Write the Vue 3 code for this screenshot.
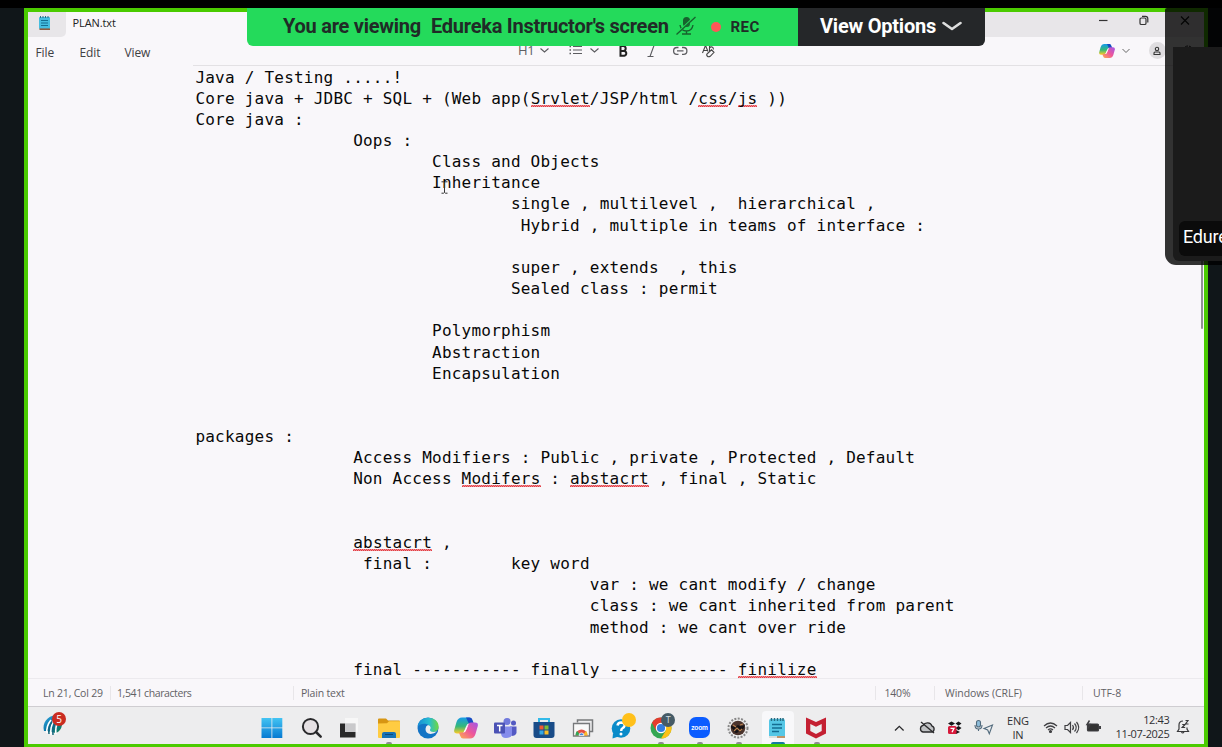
<script setup>
const lines = [
  'Java / Testing .....!',
  'Core java + JDBC + SQL + (Web app(~Srvlet~/JSP/html /~css~/~js~ ))',
  'Core java :',
  '\t\tOops :',
  '\t\t\tClass and Objects',
  '\t\t\tInheritance',
  '\t\t\t\tsingle , multilevel ,  hierarchical ,',
  '\t\t\t\t Hybrid , multiple in teams of interface :',
  '',
  '\t\t\t\tsuper , extends  , this',
  '\t\t\t\tSealed class : permit',
  '',
  '\t\t\tPolymorphism',
  '\t\t\tAbstraction',
  '\t\t\tEncapsulation',
  '',
  '',
  'packages :',
  '\t\tAccess Modifiers : Public , private , Protected , Default',
  '\t\tNon Access ~Modifers~ : ~abstacrt~ , final , Static',
  '',
  '',
  '\t\t~abstacrt~ ,',
  '\t\t final :\tkey word',
  '\t\t\t\t\tvar : we cant modify / change',
  '\t\t\t\t\tclass : we cant inherited from parent',
  '\t\t\t\t\tmethod : we cant over ride',
  '',
  '\t\tfinal ----------- finally ------------ ~finilize~',
].map((line) => line.replace(/\t/g, '        ').split('~'))
</script>

<template>
  <div class="screen">
    <div class="frame">
      <header class="titlebar">
        <div class="app-tab">
          <svg width="14" height="16" viewBox="0 0 14 16">
            <rect x="1" y="2" width="11" height="12" rx="1" fill="#45bddf" />
            <path d="M1.500 13.400h10.500v1.600h-10.500z" fill="#8c5a3c" />
            <path d="M2.500 1v2M5 1v2M7.500 1v2M10 1v2" stroke="#276c87" stroke-width="1" />
            <path d="M3 5.500h7M3 8h7M3 10.500h7" stroke="#146f91" stroke-width="1.200" />
          </svg>
        </div>
        <div class="file-tab">PLAN.txt</div>
        <div class="window-buttons">
          <svg width="100" height="24" viewBox="0 0 100 24" fill="none" stroke="#333">
            <path d="M1 8.500h8.500" stroke-width="1.200" />
            <rect x="42" y="6" width="6" height="6.500" rx="1.300" stroke-width="1.200" />
            <path d="M44 4.300h3.500q2.300 0 2.300 2.300v4" stroke-width="1.200" />
            <path d="M83 4.500l8 8M91 4.500l-8 8" stroke="#111" stroke-width="1.200" />
          </svg>
        </div>
      </header>

      <nav class="menubar">
        <span class="menu file">File</span>
        <span class="menu edit">Edit</span>
        <span class="menu view">View</span>
        <div class="format-tools">
          <span class="h1-tool">H1</span>
          <svg width="190" height="24" viewBox="538 38 190 24" fill="none" stroke="#5c5c60" stroke-width="1.100">
            <path d="M540.500 48.500l4 3.500 4-3.500M590.500 48.500l4 3.500 4-3.500" />
            <path d="M573 46.500h9M573 50h9M573 53.500h9" />
            <path d="M569.500 46.500h1.500M569.500 50h1.500M569.500 53.500h1.500" stroke-width="1.500" />
            <path d="M620.500 46h3.200a2.500 2.500 0 0 1 0 4.900h-3.200zM620.500 50.900h3.800a2.500 2.500 0 0 1 0 4.900h-3.800z" stroke="#222" stroke-width="2" />
            <path d="M650.500 45.500h6M647.500 56.500h6M654 45.500l-4 11" />
            <path d="M678.500 47.500h-1.500a3.400 3.400 0 0 0 0 6.800h1.500M682 47.500h1.500a3.400 3.400 0 0 1 0 6.800H682M677 50.900h6.500" stroke-width="1.300" />
            <path d="M702.500 53l3-7.500 2.500 6M703.700 50.500h3.800M709.500 45v6" stroke="#444" />
            <path d="M709.500 48q1-1.500 2.600-.900 1.700.900 1.200 2.400M707.500 53.500l4-3.700 2.500 2.500-3.800 4q-1.700 1-3-.300-1.200-1.200.300-2.500z" stroke="#444" />
          </svg>
        </div>
        <div class="account-tools">
          <svg class="copilot-small" width="16" height="16" viewBox="0 0 24 24">
            <defs>
              <linearGradient id="cs1" x1="0" y1="0" x2="0" y2="1"><stop stop-color="#159be9" /><stop offset=".55" stop-color="#35b879" /><stop offset="1" stop-color="#ffcb25" /></linearGradient>
              <linearGradient id="cs2" x1="1" y1="0" x2="0" y2="1"><stop stop-color="#a057e8" /><stop offset=".5" stop-color="#ef5699" /><stop offset="1" stop-color="#ffad4c" /></linearGradient>
            </defs>
            <path d="M8 1.500h7q2 0 3 3l1 3h-4q-2 0-3 3l-2 5q-1 2-3 2H3q-4 0-2.500-4.500l2-7Q4 1.500 8 1.500z" fill="url(#cs1)" />
            <path d="M12 1.500h4q2 0 2.500 2.500L20 8h-5z" fill="#174bc3" />
            <path d="M16 22.500H9q-2 0-3-3l-1-3h4q2 0 3-3l2-5q1-2 3-2h4q4 0 2.500 4.500l-2 7q-1.500 4.500-5.500 4.500z" fill="url(#cs2)" />
            <path d="M14.500 7.500l-5 9q2 0 3-3l2-5z" fill="#fff" />
          </svg>
          <svg width="10" height="8" viewBox="0 0 10 8" fill="none" stroke="#666"><path d="M1.500 2l3.500 3.500L8.500 2" /></svg>
          <span class="person">
            <svg width="10" height="10" viewBox="0 0 10 10" fill="none" stroke="#333" stroke-width="1.100"><circle cx="5" cy="3" r="1.700" /><path d="M2 8.500V7q0-1 1-1h4q1 0 1 1v1.500z" /></svg>
          </span>
          <svg class="gear" width="14" height="14" viewBox="0 0 14 14" fill="none" stroke="#222"><circle cx="7" cy="7" r="5" stroke-dasharray="3 1" /><circle cx="7" cy="7" r="2" /></svg>
        </div>
      </nav>

      <main class="editor">
        <div v-for="(parts, i) in lines" :key="i" class="line"><span v-for="(part, j) in parts" :key="j" :class="{ misspelt: j % 2 === 1 }">{{ part }}</span></div>
        <svg class="ibeam" width="7" height="13" viewBox="0 0 7 13" fill="none" stroke="#333"><path d="M.500.800h2l1 .800 1-.800h2M3.500 1.500v10M.500 12.200h2l1-.800 1 .800h2" /></svg>
        <div class="scroll-thumb"></div>
      </main>

      <footer class="statusbar">
        <span class="position">Ln 21, Col 29</span>
        <span class="characters">1,541 characters</span>
        <span class="kind">Plain text</span>
        <span class="zoom">140%</span>
        <span class="eol">Windows (CRLF)</span>
        <span class="encoding">UTF-8</span>
      </footer>

      <div class="taskbar">
        <div class="widget">
          <svg width="28" height="30" viewBox="0 0 28 30">
            <defs><linearGradient id="ball" x2="1" y2="1"><stop stop-color="#38ace1" /><stop offset=".5" stop-color="#0976a9" /><stop offset="1" stop-color="#138148" /></linearGradient></defs>
            <path d="M2 22C0 14 5 7 14 6q7 2 6 10-1 6-6 8L5 22z" fill="url(#ball)" />
            <path d="M5 24q-1-7 4-13M9 26q-1-8 3-15M14 25q-1-7 2-12" fill="none" stroke="#fff" stroke-width="1.600" />
            <path d="M7 25q-1-7 3-12M11 26q-1-8 3-13" fill="none" stroke="#14677d" stroke-width="1.500" />
          </svg>
          <span class="count">5</span>
        </div>

        <div class="apps">
          <div class="app">
            <svg viewBox="0 0 24 24"><defs><linearGradient id="win" x2="0" y2="1"><stop stop-color="#43c4f3" /><stop offset="1" stop-color="#077ad2" /></linearGradient></defs><path d="M1.500 2h10v9.500h-10zM12.300 2h10v9.500h-10zM1.500 12.300h10V22h-10zM12.300 12.300h10V22h-10z" fill="url(#win)" /></svg>
          </div>
          <div class="app">
            <svg viewBox="0 0 24 24" fill="none" stroke="#29292b"><circle cx="11.500" cy="10.500" r="7.600" fill="#e5e0e3" stroke-width="2" /><path d="M17 16l4.700 4.700" stroke-width="2.500" stroke-linecap="round" /></svg>
          </div>
          <div class="app">
            <svg viewBox="0 0 24 24"><path d="M2 7.500h15.500v14H2z" fill="#292929" /><path d="M7 2h13v14H7z" fill="#f8f8f8" opacity=".85" /><path d="M7 7.500h10.500V16H7z" fill="#c9c9cb" /></svg>
          </div>
          <div class="app running">
            <svg viewBox="0 0 24 24"><path d="M1 3.500q0-1 1-1h7l2 2h11q1 0 1 1V12H1z" fill="#d79613" /><path d="M1 7.500l9-.200 2-2h11V21q0 1-1 1H2q-1 0-1-1z" fill="#ffcc42" /><path d="M5 22v-4q0-2 2-2h10q2 0 2 2v4z" fill="#1872b5" /><path d="M8 18.500h8" stroke="#114976" /></svg>
          </div>
          <div class="app">
            <svg viewBox="0 0 24 24"><defs><linearGradient id="ed" x2="1"><stop stop-color="#168bd5" /><stop offset=".55" stop-color="#27bdd0" /><stop offset="1" stop-color="#70d83f" /></linearGradient></defs><circle cx="12" cy="12" r="10.500" fill="#1474c5" /><path d="M1.600 11C2-1.500 23-1 22.600 11q-.300 5-5.800 5c-4 0-4-1-2.700-3 .6-5-6-6-9.600-4.500-2 1-2.800 2-2.900 2.500z" fill="url(#ed)" /><path d="M14.800 12q-1.500 2-.500 3 1.700 1.700 6.700.600-3 2.500-6.500 2.400-5-.500-5-5 0-3 2.500-4 2.500.5 2.800 3z" fill="#ededef" /></svg>
          </div>
          <div class="app">
            <svg viewBox="0 0 24 24"><path d="M8 1.500h7q2 0 3 3l1 3h-4q-2 0-3 3l-2 5q-1 2-3 2H3q-4 0-2.500-4.500l2-7Q4 1.500 8 1.500z" fill="url(#cs1)" /><path d="M12 1.500h4q2 0 2.500 2.500L20 8h-5z" fill="#174bc3" /><path d="M16 22.500H9q-2 0-3-3l-1-3h4q2 0 3-3l2-5q1-2 3-2h4q4 0 2.500 4.500l-2 7q-1.500 4.500-5.500 4.500z" fill="url(#cs2)" /><path d="M14.500 7.500l-5 9q2 0 3-3l2-5z" fill="#fff" /></svg>
          </div>
          <div class="app">
            <svg viewBox="0 0 24 24"><circle cx="14" cy="5.500" r="3.500" fill="#7179dc" /><circle cx="20.500" cy="7" r="2.500" fill="#535ac2" /><path d="M17 10.500h6.500V17q-1 3-5 3z" fill="#545ac4" /><path d="M8 10.500h11V17q0 5-6 5-5 0-5-5z" fill="#858cec" /><rect x="1" y="6.500" width="11" height="11" rx="1" fill="#4b52b5" /><path d="M4 9.500h5.500M6.700 9.500v6" stroke="#fff" stroke-width="1.500" /></svg>
          </div>
          <div class="app">
            <svg viewBox="0 0 24 24"><path d="M7 7V3h10v4" fill="none" stroke="#32bae9" stroke-width="2" /><path d="M1.500 6h21v13q0 3-3 3h-15q-3 0-3-3z" fill="#194c88" /><path d="M7.500 9.500h4v4h-4z" fill="#f25a32" /><path d="M12.500 9.500h4v4h-4z" fill="#80bd34" /><path d="M7.500 14.500h4v4h-4z" fill="#35a7e2" /><path d="M12.500 14.500h4v4h-4z" fill="#f8bd26" /></svg>
          </div>
          <div class="app">
            <svg viewBox="0 0 24 24"><path d="M6.500 6.500V4h15v11.500H19" fill="none" stroke="#77797b" stroke-width="1.500" /><path d="M2.500 7.500h16V20h-16z" fill="#f9f9f9" stroke="#77797b" stroke-width="1.300" /><path d="M4.500 19.400a6 6 0 0 1 12 0z" fill="#e44f43" /><path d="M4.500 19.400q0-3 1.700-4.400l3.300 4.400z" fill="#32a757" /><path d="M16.500 19.400q0-3-1.500-4.400l-3.500 4.400z" fill="#fabd2c" /><path d="M8 19.400a2.500 2.500 0 0 1 5 0z" fill="#357ddb" stroke="#fff" stroke-width=".8" /></svg>
          </div>
          <div class="app">
            <svg viewBox="0 0 24 24"><circle cx="11" cy="12.500" r="9.300" fill="#098bc9" /><path d="M3 17l-.5 5.500 6-2z" fill="#098bc9" /><path d="M7.500 9.500q.500-3 3.700-3 3.600.3 3.300 3.200-.3 1.800-2.300 2.800-1 .500-1 2.500" fill="none" stroke="#fff" stroke-width="2.500" /><circle cx="11" cy="18" r="1.500" fill="#fff" /></svg>
            <span class="dot yellow"></span>
          </div>
          <div class="app running">
            <svg viewBox="0 0 24 24"><circle cx="12" cy="12" r="10.500" fill="#34a653" /><path d="M2.900 6.700A10.500 10.500 0 0 1 21.100 6.700H12L7.300 15z" fill="#e33b2e" /><path d="M12 6.700h9.100A10.500 10.500 0 0 1 12 22.500l4.800-8z" fill="#fbc116" /><circle cx="12" cy="12" r="5.200" fill="#fff" /><circle cx="12" cy="12" r="4.100" fill="#347de0" /></svg>
            <span class="dot profile">T</span>
          </div>
          <div class="app running"><span class="zoom-app">zoom</span></div>
          <div class="app running">
            <svg viewBox="0 0 24 24"><circle cx="12" cy="12" r="9.500" fill="#eee" stroke="#888" stroke-width="2" stroke-dasharray="2 1.400" /><circle cx="12" cy="12" r="7.300" fill="#4b342d" /><path d="M5 9q3 3 7 0 4 3 7-1-1 6-3 5-1 5-3 2l-2 2q-4 0-4-4-3-1-2-4z" fill="#171315" /><path d="M7 9l3 2M14 9l3-1M8 15l3-3 3 3 2-2" stroke="#ba8250" stroke-width="1.200" fill="none" /></svg>
          </div>
          <div class="app active">
            <svg viewBox="0 0 24 24"><rect x="4" y="3" width="16" height="19" rx="1.500" fill="#55c7e6" /><path d="M4 20h16v2H4z" fill="#d9dfde" /><path d="M12 21h8" stroke="#b67b45" stroke-width="1.500" /><path d="M6.500 2v3M9.500 2v3M12.500 2v3M15.500 2v3M18 2v3" stroke="#256c83" stroke-width="1.500" /><path d="M7 8.500h10M7 12h10M7 15.500h7" stroke="#146d92" stroke-width="1.400" /></svg>
          </div>
          <div class="app running">
            <svg viewBox="0 0 24 24"><path d="M2 1.500l10 4.500 10-4.500v16L12 22.500 2 17.500zM6.300 8v7l5.700 3 5.700-3V8L12 10.700z" fill="#c42032" fill-rule="evenodd" /></svg>
          </div>
        </div>

        <div class="tray">
          <svg width="104" height="24" viewBox="892 715 104 24" fill="none" stroke="#29292b" stroke-width="1.300">
            <path d="M896 730.500l4.300-4.200 4.300 4.200" />
            <path d="M925.500 732h7a3 3 0 0 0 .6-5.800 5 5 0 0 0-9-.8 3.400 3.400 0 0 0-.1 6.600z" fill="#bfc1c3" /><path d="M922 722l13 11" />
            <g fill="#171719" stroke="none"><path d="M949 723.500l3.500-2 3.500 2-3.500 2.200zM956.500 723.500l3-2 3 2-3 2.200zM949 728l3.500-2 3.500 2-3.500 2.200zM956.500 728l3-2 3 2-3 2.200zM953 732l4-2 4 2-4 2z" /></g>
            <rect x="949" y="726" width="8.500" height="8" rx="1.500" fill="#d7193a" stroke="none" />
            <path d="M951.500 728.300h3.500l-2 4" stroke="#fff" />
            <rect x="977.500" y="720.500" width="4" height="6.500" rx="2" stroke="#526b7d" fill="#8dbddb" stroke-width="1.100" /><path d="M976 725q0 4 3.500 4t3.500-4M979.500 729v2" stroke="#526b7d" stroke-width="1.100" />
            <path d="M993.500 725l-8.500 3.500 3.700 1.500 1.600 3.700z" stroke="#526b7d" stroke-width="1.100" />
          </svg>
          <div class="language"><span>ENG</span><span>IN</span></div>
          <svg class="status-icons" width="60" height="24" viewBox="1042 715 60 24" fill="none" stroke="#3f3f42" stroke-width="1.200">
            <path d="M1045 726q6.500-6 13 0M1047 728q4.500-4 9 0M1049 730q2.500-2.200 5 0" /><circle cx="1051.500" cy="731.500" r="1" fill="#444" />
            <path d="M1066 725.500h2.500l3-3v10l-3-3H1066zM1073.500 725q2 2.500 0 5M1075.500 723.500q3.500 4 0 8M1077.500 722q4.500 5.500 0 11" />
            <rect x="1088.500" y="724" width="11" height="7" rx="1" fill="#333" /><path d="M1101 726v3" stroke-width="2" /><path d="M1090.500 720.500l-2.500 4h3l-2 4" stroke-width="1.500" />
          </svg>
          <div class="clock"><span>12:43</span><span>11-07-2025</span></div>
          <svg class="bell" width="14" height="18" viewBox="0 0 14 18" fill="none" stroke="#39393b" stroke-width="1.200"><path d="M7 3Q3 3 3 7v4l-1.500 2.500h11L11 11V9.500M5.500 14q1.200 2 2.500 0M6.200 6.500h2.800l-2.800 3h3M9.500 2.500H12L9.500 6h3" /></svg>
        </div>
      </div>
    </div>

    <div class="share-banner">
      <div class="sharing">
        <span class="viewing">You are viewing</span>
        <span class="presenter">Edureka Instructor's screen</span>
        <svg width="20" height="20" viewBox="0 0 20 20"><rect x="7" y="1" width="7" height="10" rx="3.500" fill="#17612d" /><path d="M4 9q1 6 6.500 6T17 9M10.500 15v3M6 18h9" fill="none" stroke="#17612d" stroke-width="1.400" /><path d="M1 17.500L18.500 1" stroke="#23d959" stroke-width="2" /><path d="M.500 18.500L19.500 1" stroke="#17612d" stroke-width="1.300" /></svg>
        <i class="rec-dot"></i>
        <span class="rec">REC</span>
      </div>
      <div class="options">
        <span>View Options</span>
        <svg width="20" height="12" viewBox="0 0 20 12" fill="none" stroke="#ddd" stroke-width="2.600"><path d="M1.500 2l8.500 6 8.500-6" stroke-linecap="round" stroke-linejoin="round" /></svg>
      </div>
    </div>

    <aside class="video-panel">
      <div class="video"><span class="participant">Edure</span></div>
    </aside>
  </div>
</template>

<style>
html, body { margin: 0; overflow: hidden; background: #101619; }
</style>

<style scoped>
* { box-sizing: border-box; }
svg { display: block; flex: none; }
.screen { position: relative; width: 1222px; height: 747px; overflow: hidden; background: #101619; border-top: 8px solid #000; font-family: "Open Sans", "Noto Sans", sans-serif; }
.frame { width: 1184px; height: 740px; margin-left: 24px; border: 4px solid #4bcb00; background: #f9f7fa; display: flex; flex-direction: column; }
.titlebar { height: 25px; flex: none; display: flex; background: #f9f7fa; }
.app-tab { width: 38px; background: #e8e6e9; border-radius: 0 0 5px 0; padding: 3px 0 0 10px; }
.file-tab { width: 500px; padding: 1px 0 0 6.500px; font-size: 11px; line-height: 19px; color: #222; letter-spacing: -.1px; }
.window-buttons { flex: 1; background: #e8e6e9; display: flex; padding-left: 532px; }
.menubar { height: 29px; flex: none; display: flex; color: #404043; font-size: 12px; line-height: 32px; background: linear-gradient(#e3e1e4, #e3e1e4) 165px 28px / 1011px 1px no-repeat; letter-spacing: -.1px; }
.menu { flex: none; white-space: nowrap; }
.file { width: 44.500px; padding-left: 7.500px; }
.edit { width: 45px; padding-left: 7px; }
.view { width: 80px; padding-left: 7px; }
.format-tools { width: 531px; display: flex; padding-left: 320.500px; }
.h1-tool { width: 19.500px; line-height: 26px; font-size: 13px; color: #606064; letter-spacing: -.4px; }
.format-tools svg { margin-top: 1px; }
.account-tools { margin-left: 369px; display: flex; align-items: center; height: 27px; flex: none; }
.account-tools > svg { margin-right: 6px; }
.account-tools .copilot-small { margin-left: 1px; }
.person { width: 17px; height: 17px; margin-left: 12px; border-radius: 50%; background: #dfdde0; display: flex; align-items: center; justify-content: center; flex: none; }
.account-tools .gear { margin: 0 0 0 15px; }
.editor { position: relative; flex: none; height: 613px; overflow: hidden; padding: .500px 0 0 167.400px; color: #080808; font: 16px/21.170px "DejaVu Sans Mono", monospace; letter-spacing: .227px; border-bottom: 1px solid #eceaee; }
.line { height: 21.170px; white-space: pre; }
.misspelt { background: linear-gradient(90deg, #e23c44 50%, #ee8c91 50%) 0 calc(100% - 1px) / 2px 1px repeat-x, linear-gradient(90deg, #ee8c91 50%, #e6474f 50%) 0 calc(100% - 2px) / 2px 1px repeat-x; }
.ibeam { position: absolute; left: 413px; top: 115px; }
.scroll-thumb { position: absolute; right: 1px; top: 60px; width: 2px; height: 203px; background: #929095; border-radius: 2px; }
.statusbar { height: 28px; flex: none; display: flex; align-items: center; border-bottom: 1px solid #cfcdd1; font-size: 10.500px; color: #626165; letter-spacing: -.200px; }
.statusbar span { height: 14px; line-height: 14px; white-space: nowrap; border-left: 1px solid #e8e6e9; flex: none; }
.statusbar .position { width: 82px; padding-left: 15px; border-left: 0; }
.statusbar .characters { width: 183px; padding-left: 6px; letter-spacing: -.400px; }
.kind { width: 582px; padding-left: 7px; }
.zoom { width: 59px; padding-left: 8.500px; }
.statusbar .eol { width: 148px; padding-left: 10px; letter-spacing: -.050px; }
.statusbar .encoding { padding-left: 10px; letter-spacing: 0; }
.taskbar { height: 37px; flex: none; display: flex; background: #ededee; }
.widget { position: relative; width: 224.800px; padding: 2px 0 0 14px; }
.count { position: absolute; left: 24px; top: 5px; width: 14px; height: 14px; border-radius: 50%; background: #ca2c20; color: #fff; text-align: center; font-size: 10px; line-height: 14px; }
.apps { display: flex; flex: none; }
.app { position: relative; width: 38.850px; height: 37px; display: flex; justify-content: center; padding-top: 9px; }
.app svg { width: 24px; height: 24px; }
.running::after { content: ""; position: absolute; left: 17px; bottom: 0; width: 6px; height: 2px; border-radius: 2px 2px 0 0; background: #8c8c8e; }
.active::before { content: ""; position: absolute; left: 4px; top: 4px; width: 32px; height: 33px; background: #f8f8fa; border-radius: 4px 4px 0 0; }
.active svg { position: relative; }
.active::after { content: ""; position: absolute; left: 13px; bottom: 0; width: 14px; height: 2px; background: #147b9d; border-radius: 2px 2px 0 0; }
.dot { position: absolute; left: 20px; top: 5.500px; width: 14px; height: 14px; border-radius: 50%; color: #d6dfe2; text-align: center; font-size: 9px; line-height: 14px; }
.yellow { background: #ffc01a; }
.profile { background: #465b66; }
.zoom-app { width: 21px; height: 21px; margin-top: 1px; border-radius: 7px; background: #0b5cff; color: #fff; font: bold 7px/20px Lato, sans-serif; text-align: center; letter-spacing: -.2px; }
.tray { margin-left: 56px; padding-top: 8px; display: flex; flex: none; color: #303033; font-size: 11px; line-height: 14px; }
.tray > svg { flex: none; }
.language { width: 45px; display: flex; flex-direction: column; align-items: center; margin-top: -1px; letter-spacing: -.2px; }
.status-icons { margin-left: 1px; }
.clock { width: 68px; display: flex; flex-direction: column; align-items: flex-end; margin-top: -2px; letter-spacing: -.35px; white-space: nowrap; }
.bell { margin: 3px 0 0 7px; }
.share-banner { position: absolute; left: 247px; top: 0; width: 738px; height: 38px; border-radius: 0 0 6px 6px; overflow: hidden; display: flex; font-family: Roboto, sans-serif; font-weight: bold; font-size: 20px; line-height: 36px; color: #202b27; white-space: nowrap; }
.sharing { width: 551px; background: #24da5b; display: flex; padding-left: 36px; }
.viewing { width: 148px; letter-spacing: -.25px; }
.presenter { width: 245px; letter-spacing: -.25px; }
.sharing svg { margin-top: 8px; }
.rec-dot { width: 10px; height: 10px; margin: 14px 9.500px 0 15px; border-radius: 50%; background: #ff5757; }
.rec { font-size: 15px; line-height: 38px; letter-spacing: .5px; }
.options { flex: 1; display: flex; align-items: center; background: #252729; color: #fff; padding: 0 0 3px 22px; letter-spacing: -.22px; }
.options svg { margin: 2px 0 0 6px; }
.video-panel { position: absolute; left: 1165px; top: 0; width: 70px; height: 257px; border-radius: 2px 0 0 11px; background: rgba(0, 0, 0, .8); padding: 39px 0 4px 8px; }
.video { height: 214px; border-radius: 0 0 0 6px; background: #1b1b1b; padding: 174px 0 0 6px; }
.participant { display: block; height: 35px; border-radius: 6px; background: #0b0b0b; color: #fff; font: 18px/31px Roboto, sans-serif; padding-left: 4px; letter-spacing: -.2px; }
</style>
